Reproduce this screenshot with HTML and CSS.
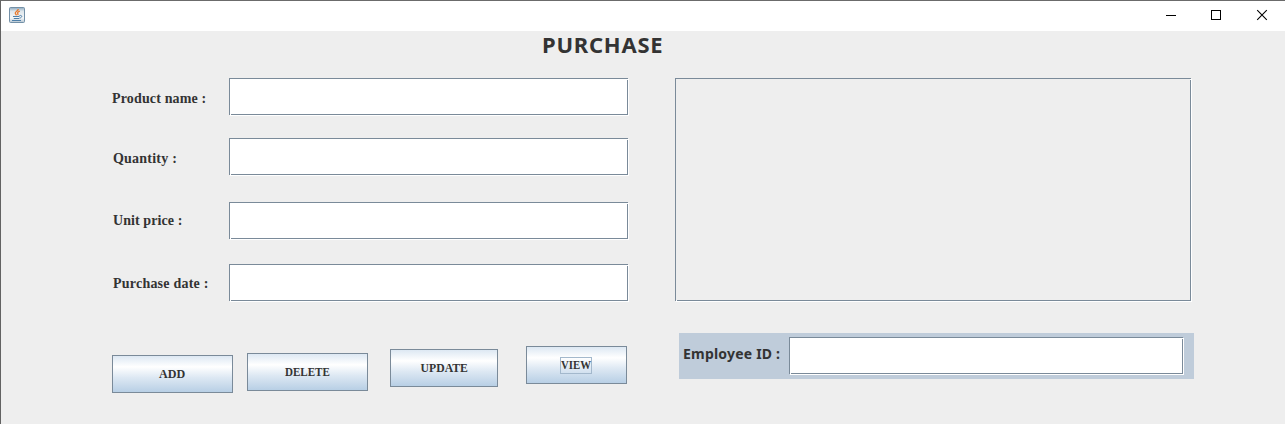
FILE: index.html
```html
<!DOCTYPE html>
<html lang="en">
<head>
<meta charset="utf-8">
<title>Purchase</title>
<link rel="stylesheet" href="styles.css">
</head>
<body>
<div class="window">
  <header class="titlebar">
    <svg class="app-icon" width="16" height="16" viewBox="0 0 16 16">
      <defs><linearGradient id="g" x1="0" y1="0" x2="0" y2="1"><stop offset="0" stop-color="#8ea9be"/><stop offset=".25" stop-color="#dfe7ec"/><stop offset=".7" stop-color="#f4f6f7"/><stop offset="1" stop-color="#b4c4d0"/></linearGradient></defs>
      <rect x=".5" y=".5" width="15" height="15" rx="1" fill="url(#g)" stroke="#7390a7"/>
      <path d="M9.200 2C9.500 4 5.800 4.600 6.300 6.300c.2.800 1 1.200 1.100 2M10.800 4.200C8.600 5 8.200 5.800 8.800 6.500c.4.600.3 1.100-.2 1.600" fill="none" stroke="#e8792c" stroke-width="1.300"/>
      <path d="M4 9.500h6.500M4.800 11.500h5.200M3 13.500h9M10.500 8.500c3.200-.6 2.800 2.300-.2 2.700" fill="none" stroke="#4e7fa8" stroke-width="1"/>
    </svg>
    <div class="controls">
      <svg width="46" height="30" viewBox="0 0 46 30" shape-rendering="crispEdges"><path d="M18 14.500h10" stroke="#000"/></svg>
      <svg width="46" height="30" viewBox="0 0 46 30" shape-rendering="crispEdges"><rect x="17.500" y="9.500" width="9" height="9" fill="none" stroke="#000"/></svg>
      <svg width="46" height="30" viewBox="0 0 46 30"><path d="M17.200 9.200l9.600 9.600M26.800 9.200l-9.600 9.600" stroke="#000" stroke-width="1.100"/></svg>
    </div>
  </header>
  <main class="content">
    <h1 class="title">PURCHASE</h1>
    <div class="columns">
      <section class="left">
        <form class="form">
          <label class="label name">Product name :</label><div class="field"></div>
          <label class="label quantity">Quantity :</label><div class="field"></div>
          <label class="label price">Unit price :</label><div class="field"></div>
          <label class="label date">Purchase date :</label><div class="field"></div>
        </form>
        <div class="buttons">
          <button class="button add"><span class="caption">ADD</span></button>
          <button class="button delete"><span class="caption">DELETE</span></button>
          <button class="button update"><span class="caption">UPDATE</span></button>
          <button class="button view"><span class="focus"><span class="caption">VIEW</span></span></button>
        </div>
      </section>
      <section class="right">
        <div class="field list"></div>
        <div class="employee">
          <label class="employee-label">Employee ID :</label>
          <div class="field id-field"></div>
        </div>
      </section>
    </div>
  </main>
</div>
</body>
</html>
```
FILE: styles.css
```css
* { box-sizing: border-box; }
body { margin: 0; overflow: hidden; color: #333; background: #eee; }
.window { width: 1285px; height: 424px; border-top: 1px solid #6b6b6b; border-left: 1px solid #626262; background: #eee; }
.titlebar { display: flex; justify-content: space-between; height: 30px; padding-left: 8px; background: #fff; }
.app-icon { margin-top: 6px; }
.controls { display: flex; margin-right: -1px; }
.controls svg { display: block; }
.title { width: 130px; height: 47px; margin: 0 0 0 541px; font: bold 22px/27px "Noto Sans", sans-serif; letter-spacing: .75px; white-space: nowrap; }
.columns { display: flex; }
.left { width: 674px; padding-left: 111px; }
.form { display: grid; grid-template-columns: 117px 399px; grid-template-rows: 60px 64px 62px 37px; align-items: start; }
.field { position: relative; height: 37px; border: 1px solid #7a8a99; background: #fff; box-shadow: 1px 1px 0 #fff; }
/* highlight pixels that notch the etched border's corners */
.field::before, .field::after { content: ""; position: absolute; width: 1px; height: 1px; background: #fff; }
.field::before { left: 0; bottom: -1px; }
.field::after { right: -1px; top: 0; }
.label { font: bold 14px/20px "Liberation Serif", "Times New Roman", serif; letter-spacing: .15px; padding-top: 11px; white-space: nowrap; }
.quantity, .price, .date { padding-left: 1px; }
.quantity, .date { letter-spacing: .22px; }
.price { padding-top: 9px; letter-spacing: .08px; }
.date { padding-top: 10px; }
.buttons { display: flex; align-items: flex-start; margin-top: 45px; }
.button { height: 38px; padding: 0; border: 1px solid #7a8a99; color: #333; font: bold 13px/16px "Liberation Serif", "Times New Roman", serif; background: linear-gradient(#dde8f3, #fff 30%, #dde8f3 60%, #b8cfe5); }
.caption { display: inline-block; }
.add { width: 121px; margin-top: 9px; }
.add .caption { transform: scaleX(.93); }
.delete { width: 121px; margin: 7px 0 0 14px; }
.delete .caption { transform: scaleX(.85); }
.update { width: 108px; margin: 3px 0 0 22px; }
.update .caption { transform: scaleX(.9); }
.view { width: 101px; margin-left: 28px; }
.view .caption { transform: scaleX(.83); transform-origin: left; }
.focus { display: block; width: 32px; height: 17px; margin: 0 auto; position: relative; left: -1px; border: 1px solid #a3b8cc; line-height: 14px; text-align: left; white-space: nowrap; }
.list { width: 516px; height: 223px; background: #eee; }
.employee { display: flex; width: 515px; height: 46px; margin: 32px 0 0 4px; padding: 4px 0 0 4px; background: #bfccda; }
.employee-label { width: 106px; font: bold 14px/34px "Noto Sans", sans-serif; letter-spacing: .2px; white-space: nowrap; }
.id-field { width: 394px; }
```
